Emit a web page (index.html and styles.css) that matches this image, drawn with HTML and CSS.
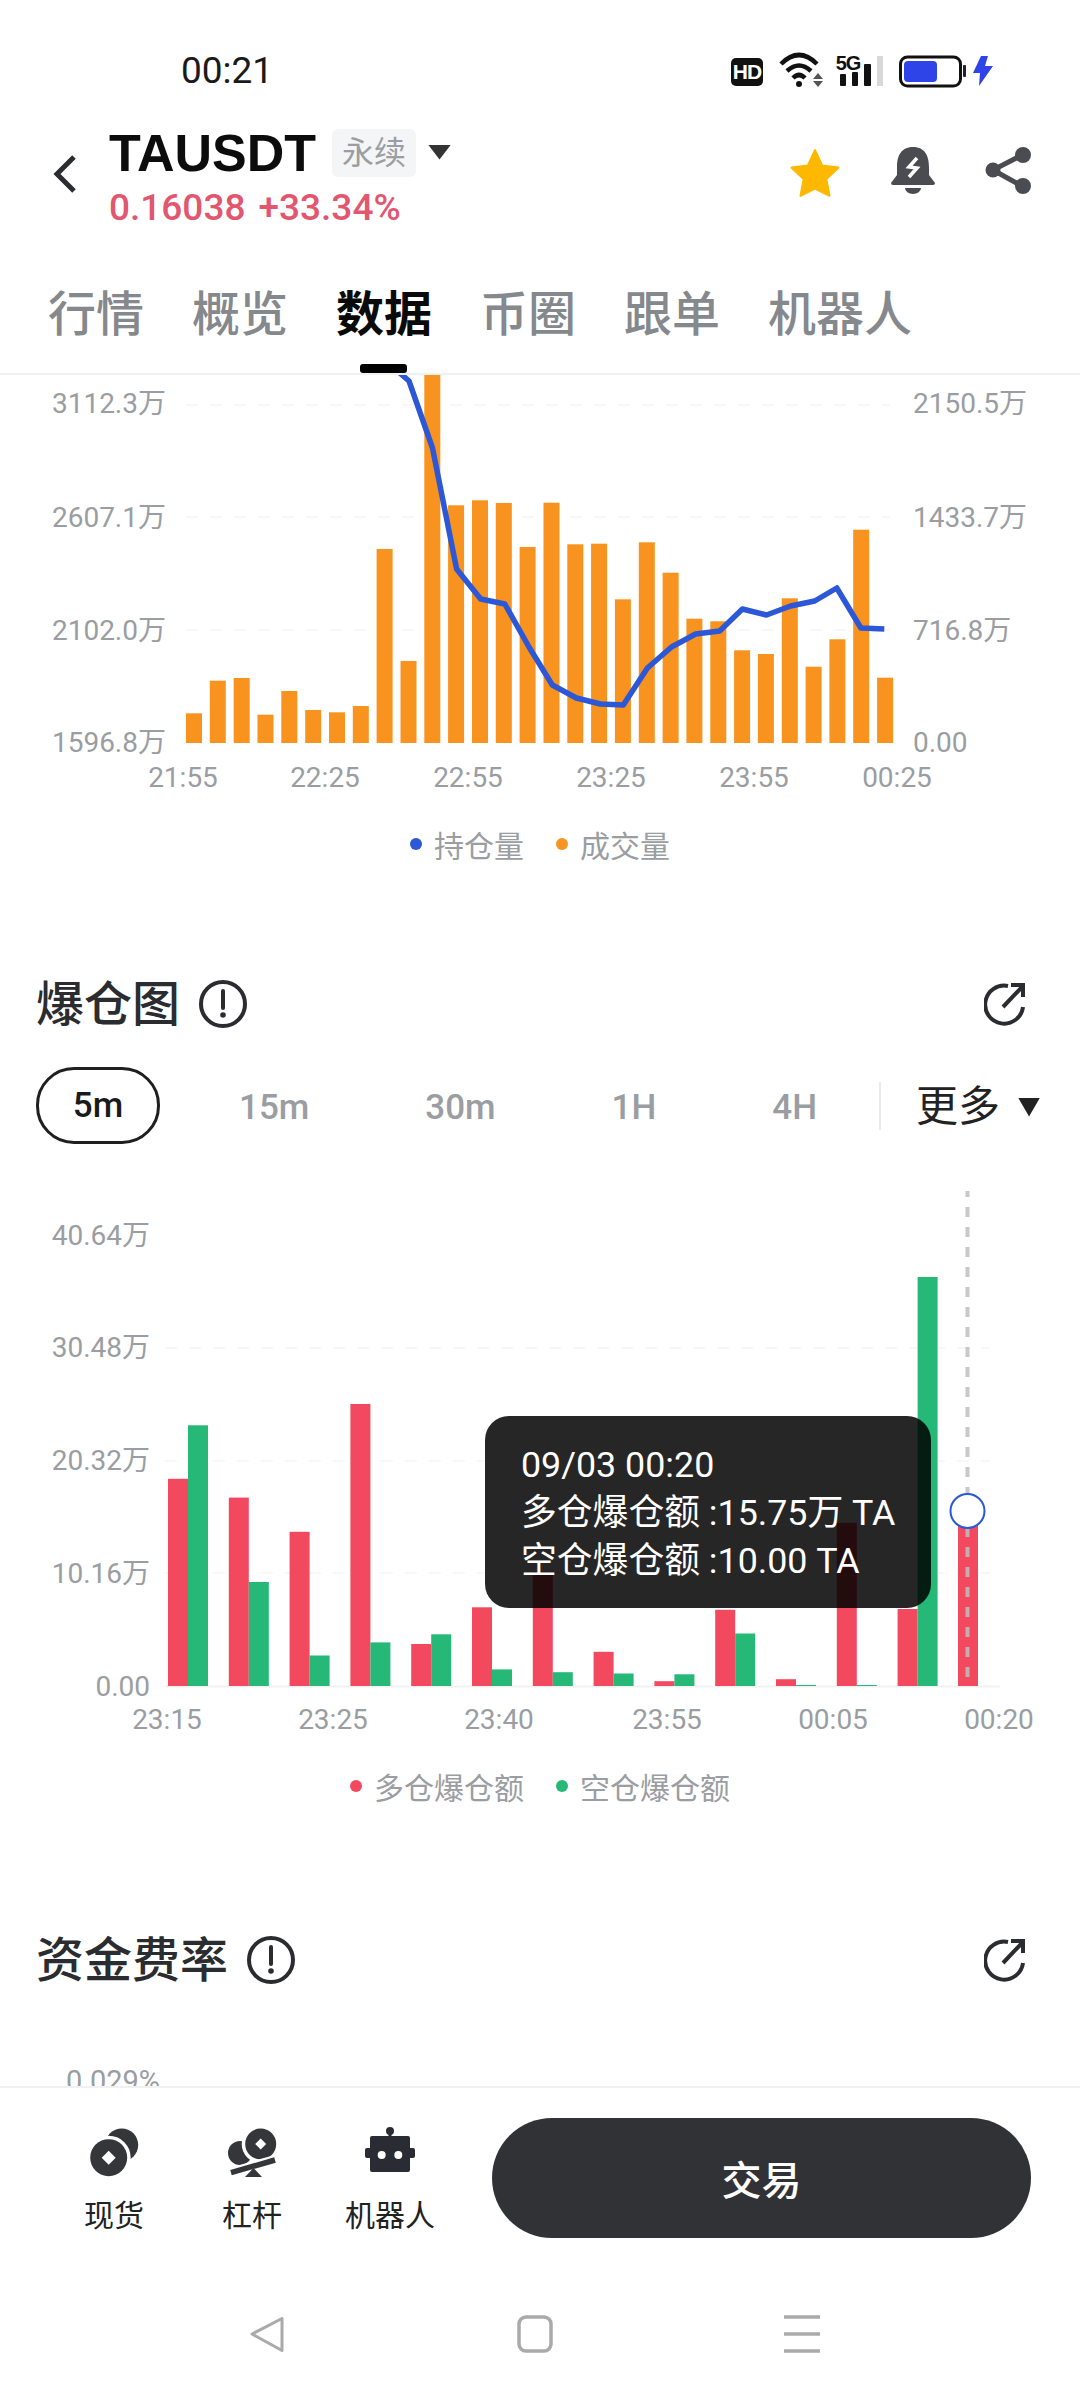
FILE: index.html
```html
<!DOCTYPE html>
<html lang="zh">
<head>
<meta charset="utf-8">
<title>TAUSDT</title>
<link rel="stylesheet" href="styles.css">
</head>
<body>
<div class="page">
  <div class="status">
    <span class="clock">00:21</span>
    <svg class="status-icons" width="265" height="40" viewBox="731 50 265 40">
      <rect x="731" y="58" width="32" height="28" rx="5" fill="#111"/>
      <text class="st-hd" x="747" y="79" text-anchor="middle">HD</text>
      <path class="st-wifi" d="M781 64Q799 46 817 64M787 71Q799 60 811 71M793 78Q799 72 805 78"/>
      <circle cx="799" cy="84" r="3" fill="#111"/>
      <path d="M818 73l5 6h-10zM818 87l5-6h-10z" fill="#555"/>
      <text class="st-5g" x="848" y="70" text-anchor="middle">5G</text>
      <rect x="840" y="74" width="6" height="12" rx="1" fill="#111"/>
      <rect x="852" y="72" width="6" height="14" rx="1" fill="#111"/>
      <rect x="864" y="64" width="7" height="22" rx="1" fill="#111"/>
      <rect x="877" y="56" width="6" height="30" fill="#d9d9d9"/>
      <rect x="900.500" y="57" width="60" height="29" rx="7" fill="#fff" stroke="#111" stroke-width="3"/>
      <rect x="904" y="61" width="33" height="21" rx="4" fill="#2f44e8"/>
      <rect x="963" y="65" width="3" height="12" rx="1" fill="#222"/>
      <path d="M981 56l-8 17h7l-1 13 14-20h-8l3-10z" fill="#2f44e8"/>
    </svg>
  </div>

  <header class="head">
    <svg class="back" width="26" height="40" viewBox="0 0 26 40"><path d="M22 3L5 20l17 17" fill="none" stroke="#2a2c30" stroke-width="5"/></svg>
    <div class="sym">
      <div class="sym-row">
        <span class="sym-name">TAUSDT</span>
        <span class="sym-tag">永续</span>
        <span class="caret-sm"></span>
      </div>
      <div class="sym-price"><span>0.16038</span><span>+33.34%</span></div>
    </div>
    <div class="head-actions">
      <svg width="52" height="50" viewBox="0 0 50 48"><path d="M25 3l6.800 14.800 15.700 2-11.600 11 3 16-13.900-6.800-13.900 6.800 3-16L2.500 19.800l15.700-2z" fill="#ffb800" stroke="#ffb800" stroke-width="2" stroke-linejoin="round"/></svg>
      <svg width="44" height="47" viewBox="0 0 44 47"><path d="M22 0C10 0 6 9 6 20v8l-6 8q0 2 2 2h40q2 0 2-2l-6-8v-8C38 9 34 0 22 0z" fill="#4a4c52"/><path d="M14 41h16a8 6 0 0 1-16 0z" fill="#4a4c52"/><path d="M26 11l-8 9 8 1-8 9" fill="none" stroke="#fff" stroke-width="3.500"/></svg>
      <svg width="46" height="47" viewBox="0 0 46 47"><path d="M37 8L8 23l29 16" fill="none" stroke="#4a4c52" stroke-width="5"/><circle cx="8" cy="23" r="7.500" fill="#4a4c52"/><circle cx="38" cy="8" r="8" fill="#4a4c52"/><circle cx="38" cy="39" r="8" fill="#4a4c52"/></svg>
    </div>
  </header>

  <nav class="tabs">
    <span class="tab">行情</span>
    <span class="tab">概览</span>
    <span class="tab tab-on">数据</span>
    <span class="tab">币圈</span>
    <span class="tab">跟单</span>
    <span class="tab">机器人</span>
    <i class="tab-mark"></i>
  </nav>

  <main class="main">
    <svg class="chart chart-a" width="1080" height="435" viewBox="0 375 1080 435">
      <g class="grid">
        <path d="M186 405H890M186 517H890M186 630H890"/>
      </g>
      <g class="axis">
        <text x="166" y="413" text-anchor="end">3112.3万</text>
        <text x="166" y="527" text-anchor="end">2607.1万</text>
        <text x="166" y="640" text-anchor="end">2102.0万</text>
        <text x="166" y="752" text-anchor="end">1596.8万</text>
        <text x="913" y="413">2150.5万</text>
        <text x="913" y="527">1433.7万</text>
        <text x="913" y="640">716.8万</text>
        <text x="913" y="752">0.00</text>
        <text x="183" y="787" text-anchor="middle">21:55</text>
        <text x="325" y="787" text-anchor="middle">22:25</text>
        <text x="468" y="787" text-anchor="middle">22:55</text>
        <text x="611" y="787" text-anchor="middle">23:25</text>
        <text x="754" y="787" text-anchor="middle">23:55</text>
        <text x="897" y="787" text-anchor="middle">00:25</text>
      </g>
      <g class="vol">
        <rect x="186" y="713.300" width="16" height="29.700"/>
        <rect x="209.800" y="680.700" width="16" height="62.300"/>
        <rect x="233.700" y="678" width="16" height="65"/>
        <rect x="257.500" y="714.700" width="16" height="28.300"/>
        <rect x="281.300" y="691" width="16" height="52"/>
        <rect x="305.200" y="710" width="16" height="33"/>
        <rect x="329" y="712.300" width="16" height="30.700"/>
        <rect x="352.800" y="706" width="16" height="37"/>
        <rect x="376.600" y="549" width="16" height="194"/>
        <rect x="400.500" y="661" width="16" height="82"/>
        <rect x="424.300" y="370" width="16" height="373"/>
        <rect x="448.100" y="505.300" width="16" height="237.700"/>
        <rect x="472" y="500.300" width="16" height="242.700"/>
        <rect x="495.800" y="503" width="16" height="240"/>
        <rect x="519.600" y="547" width="16" height="196"/>
        <rect x="543.500" y="502.700" width="16" height="240.300"/>
        <rect x="567.300" y="544.300" width="16" height="198.700"/>
        <rect x="591.100" y="543.700" width="16" height="199.300"/>
        <rect x="614.900" y="599.300" width="16" height="143.700"/>
        <rect x="638.800" y="542.300" width="16" height="200.700"/>
        <rect x="662.600" y="572.700" width="16" height="170.300"/>
        <rect x="686.400" y="618.700" width="16" height="124.300"/>
        <rect x="710.300" y="621.300" width="16" height="121.700"/>
        <rect x="734.100" y="650.300" width="16" height="92.700"/>
        <rect x="757.900" y="654" width="16" height="89"/>
        <rect x="781.800" y="598.300" width="16" height="144.700"/>
        <rect x="805.600" y="666.700" width="16" height="76.300"/>
        <rect x="829.400" y="639.300" width="16" height="103.700"/>
        <rect x="853.200" y="529.700" width="16" height="213.300"/>
        <rect x="877.100" y="677.700" width="16" height="65.300"/>
      </g>
      <polyline class="oi" points="385,360 409,381 432.500,448 456.600,569 480.700,599 504.800,604 529,647 552.300,685 576.400,698 600.500,704 623.300,705 647.400,668 671.500,647 695.600,634 719.700,631 742.400,609 766.500,615 790.600,606 814.700,601 836.800,588 860.900,628 884.300,629"/>
    </svg>
    <div class="legend">
      <span class="lg"><i class="dot dot-blue"></i>持仓量</span>
      <span class="lg"><i class="dot dot-orange"></i>成交量</span>
    </div>

    <div class="sec-head sec-a">
      <h2 class="sec-title">爆仓图</h2>
      <svg class="info" width="50" height="50" viewBox="0 0 50 50"><circle cx="25" cy="25" r="22" fill="none" stroke="#2a2c30" stroke-width="4"/><path d="M25 12v17" stroke="#2a2c30" stroke-width="4" stroke-linecap="round"/><circle cx="25" cy="36" r="2.800" fill="#2a2c30"/></svg>
      <svg class="out" width="42" height="44" viewBox="0 0 42 44"><path d="M24 4A19 19 0 1 0 39 25M19 25L38 5M27 3H39V15" fill="none" stroke="#2a2c30" stroke-width="4"/></svg>
    </div>

    <div class="range">
      <span class="range-on">5m</span>
      <span class="range-item">15m</span>
      <span class="range-item">30m</span>
      <span class="range-item">1H</span>
      <span class="range-item">4H</span>
      <i class="range-div"></i>
      <span class="range-more">更多</span>
      <span class="caret-md"></span>
    </div>

    <div class="liq-wrap">
      <svg class="chart chart-b" width="1080" height="572" viewBox="0 1180 1080 572">
        <g class="grid">
          <path d="M165 1348H990M165 1461H990M165 1573H990"/>
        </g>
        <path class="base" d="M165 1686.500H1000"/>
        <g class="axis">
          <text x="150" y="1245" text-anchor="end">40.64万</text>
          <text x="150" y="1357" text-anchor="end">30.48万</text>
          <text x="150" y="1470" text-anchor="end">20.32万</text>
          <text x="150" y="1583" text-anchor="end">10.16万</text>
          <text x="150" y="1696" text-anchor="end">0.00</text>
          <text x="167" y="1729" text-anchor="middle">23:15</text>
          <text x="333" y="1729" text-anchor="middle">23:25</text>
          <text x="499" y="1729" text-anchor="middle">23:40</text>
          <text x="667" y="1729" text-anchor="middle">23:55</text>
          <text x="833" y="1729" text-anchor="middle">00:05</text>
          <text x="999" y="1729" text-anchor="middle">00:20</text>
        </g>
        <g class="long">
          <rect x="168" y="1478.800" width="20" height="207.200"/>
          <rect x="228.800" y="1497.600" width="20" height="188.400"/>
          <rect x="289.600" y="1531.800" width="20" height="154.200"/>
          <rect x="350.400" y="1404" width="20" height="282"/>
          <rect x="411.200" y="1644" width="20" height="42"/>
          <rect x="472" y="1607.300" width="20" height="78.700"/>
          <rect x="532.800" y="1571.800" width="20" height="114.200"/>
          <rect x="593.600" y="1651.800" width="20" height="34.200"/>
          <rect x="654.400" y="1681.200" width="20" height="4.800"/>
          <rect x="715.200" y="1609.800" width="20" height="76.200"/>
          <rect x="776" y="1679.200" width="20" height="6.800"/>
          <rect x="836.800" y="1522.900" width="20" height="163.100"/>
          <rect x="897.600" y="1609" width="20" height="77"/>
          <rect x="958" y="1511.400" width="20" height="174.600"/>
        </g>
        <g class="short">
          <rect x="188" y="1425.300" width="20" height="260.700"/>
          <rect x="248.800" y="1582" width="20" height="104"/>
          <rect x="309.600" y="1655.500" width="20" height="30.500"/>
          <rect x="370.400" y="1642.400" width="20" height="43.600"/>
          <rect x="431.200" y="1634.300" width="20" height="51.700"/>
          <rect x="492" y="1669.400" width="20" height="16.600"/>
          <rect x="552.800" y="1672.200" width="20" height="13.800"/>
          <rect x="613.600" y="1673.500" width="20" height="12.500"/>
          <rect x="674.400" y="1674.300" width="20" height="11.700"/>
          <rect x="735.200" y="1633.500" width="20" height="52.500"/>
          <rect x="796" y="1685" width="20" height="1"/>
          <rect x="856.800" y="1685" width="20" height="1"/>
          <rect x="917.600" y="1277" width="20" height="409"/>
        </g>
        <path class="cross" d="M967.500 1191V1686"/>
        <circle class="cross-dot" cx="967.500" cy="1511" r="17"/>
      </svg>
      <div class="tip">
        <div>09/03 00:20</div>
        <div>多仓爆仓额 :15.75万 TA</div>
        <div>空仓爆仓额 :10.00 TA</div>
      </div>
    </div>
    <div class="legend">
      <span class="lg"><i class="dot dot-red"></i>多仓爆仓额</span>
      <span class="lg"><i class="dot dot-green"></i>空仓爆仓额</span>
    </div>

    <div class="sec-head sec-b">
      <h2 class="sec-title">资金费率</h2>
      <svg class="info" width="50" height="50" viewBox="0 0 50 50"><circle cx="25" cy="25" r="22" fill="none" stroke="#2a2c30" stroke-width="4"/><path d="M25 12v17" stroke="#2a2c30" stroke-width="4" stroke-linecap="round"/><circle cx="25" cy="36" r="2.800" fill="#2a2c30"/></svg>
      <svg class="out" width="42" height="44" viewBox="0 0 42 44"><path d="M24 4A19 19 0 1 0 39 25M19 25L38 5M27 3H39V15" fill="none" stroke="#2a2c30" stroke-width="4"/></svg>
    </div>
    <div class="rate-label">0.029%</div>
  </main>

  <div class="dock">
    <div class="dock-item">
      <svg class="coin" width="50" height="52" viewBox="0 0 50 52"><circle cx="31.700" cy="19" r="16.500" fill="#35363a"/><circle cx="18.700" cy="31.700" r="22" fill="#fff"/><circle cx="18.700" cy="31.700" r="18.500" fill="#35363a"/><path d="M18.700 24.700l7 7-7 7-7-7z" fill="#fff"/></svg>
      <span class="dock-label">现货</span>
    </div>
    <div class="dock-item">
      <svg width="52" height="52" viewBox="0 0 52 52"><circle cx="14" cy="27" r="12" fill="#35363a"/><circle cx="34.700" cy="18" r="19" fill="#fff"/><circle cx="34.700" cy="18" r="15.500" fill="#35363a"/><path d="M34.700 12.500l5.500 5.500-5.500 5.500-5.500-5.500z" fill="#fff"/><path d="M5 46.700L49 34" stroke="#fff" stroke-width="10"/><path d="M5 46.700L49 34" stroke="#35363a" stroke-width="5.500"/><path d="M19 51h17l-8.500-9z" fill="#35363a"/></svg>
      <span class="dock-label">杠杆</span>
    </div>
    <div class="dock-item">
      <svg width="50" height="52" viewBox="0 0 50 52"><circle cx="25" cy="5" r="4" fill="#2a2c33"/><rect x="23.500" y="5" width="3" height="7" fill="#2a2c33"/><rect x="5" y="10" width="40" height="36" rx="2" fill="#2a2c33"/><rect x="0" y="22" width="50" height="10" rx="2" fill="#2a2c33"/><circle cx="16.700" cy="29" r="4" fill="#fff"/><circle cx="33.300" cy="29" r="4" fill="#fff"/></svg>
      <span class="dock-label">机器人</span>
    </div>
    <button class="trade" type="button">交易</button>
  </div>

  <div class="sysnav">
    <svg width="36" height="38" viewBox="0 0 36 38"><path d="M33 3.500L3 19l30 16.500z" fill="none" stroke="#aaa" stroke-width="3" stroke-linejoin="round"/></svg>
    <svg width="36" height="38" viewBox="0 0 36 38"><rect x="2" y="2" width="32" height="34" rx="7" fill="none" stroke="#aaa" stroke-width="3.500"/></svg>
    <svg width="36" height="38" viewBox="0 0 36 38"><path d="M0 2H36M0 19H36M0 36H36" stroke="#aaa" stroke-width="3.500"/></svg>
  </div>
</div>
</body>
</html>
```
FILE: styles.css
```css
* { box-sizing: border-box; }
html, body { margin: 0; padding: 0; background: #fff; }
body { font-family: Roboto, "Noto Sans CJK SC", sans-serif; }
.page { width: 1080px; height: 2400px; display: flex; flex-direction: column; overflow: hidden; background: #fff; }

.status { height: 110px; flex: none; display: flex; align-items: flex-start; justify-content: space-between; padding: 50px 84px 0 181px; }
.clock { font-size: 37px; line-height: 42px; color: #1a1a1a; font-weight: 400; }
.status-icons { display: block; }
.st-hd { font: 700 21px "Liberation Sans", sans-serif; fill: #fff; letter-spacing: -1px; }
.st-5g { font: 700 20px "Liberation Sans", sans-serif; fill: #111; letter-spacing: -1px; }
.st-wifi { fill: none; stroke: #111; stroke-width: 4.5; }

.head { height: 145px; flex: none; position: relative; display: flex; align-items: flex-start; padding: 15px 49px 0 52px; }
.back { flex: none; margin-top: 29px; }
.sym { margin-left: 31px; display: flex; flex-direction: column; }
.sym-row { display: flex; align-items: center; height: 56px; }
.sym-name { font: 700 52px/56px "Liberation Sans", sans-serif; color: #0c0c0c; }
.sym-tag { margin-left: 16px; width: 84px; height: 48px; border-radius: 6px; background: #f4f5f6; color: #9a9da1; font-size: 32px; line-height: 48px; text-align: center; }
.caret-sm { margin-left: 12px; margin-top: -2px; width: 23px; height: 15px; background: #333; clip-path: polygon(0 0, 100% 0, 50% 100%); }
.sym-price { display: flex; gap: 13px; margin-top: 6px; font-size: 37px; line-height: 42px; font-weight: 500; color: #e2566f; }
.head-actions { margin-left: auto; margin-top: 22px; display: flex; gap: 50px; align-items: flex-start; }
.head-actions svg { display: block; }

.tabs { height: 120px; flex: none; position: relative; display: flex; align-items: flex-start; gap: 48px; padding: 28px 0 0 48px; border-bottom: 2px solid #f1f1f1; }
.tab { font-size: 48px; line-height: 64px; font-weight: 500; color: #85888c; }
.tab-on { color: #0a0a0a; font-weight: 700; }
.tab-mark { position: absolute; left: 360px; bottom: 0; width: 47px; height: 9px; border-radius: 3px; background: #000; }

.main { height: 1713px; flex: none; overflow: hidden; border-bottom: 2px solid #f1f1f1; }
.chart { display: block; }
.grid path { fill: none; stroke: #f5f5f5; stroke-width: 1.500; stroke-dasharray: 12 12; }
.base { fill: none; stroke: #f1f1f1; stroke-width: 2; }
.axis text { font-size: 28px; fill: #9a9da1; }
.vol rect { fill: #f7931e; }
.oi { fill: none; stroke: #2c57d6; stroke-width: 5.500; stroke-linejoin: round; }
.long rect { fill: #f2495f; }
.short rect { fill: #26b877; }
.cross { stroke: rgba(190, 190, 190, .85); stroke-width: 4; stroke-dasharray: 10 10; stroke-dashoffset: 4; fill: none; }
.cross-dot { fill: #fff; stroke: #2c57d6; stroke-width: 2; }

.legend { height: 70px; display: flex; justify-content: center; gap: 32px; align-items: center; padding-bottom: 2px; }
.lg { display: flex; align-items: center; gap: 12px; font-size: 30px; color: #9a9da1; }
.dot { width: 12px; height: 12px; border-radius: 50%; }
.dot-blue { background: #2c57d6; }
.dot-orange { background: #f7931e; }
.dot-red { background: #f2495f; }
.dot-green { background: #26b877; }

.sec-head { height: 60px; display: flex; align-items: center; padding: 0 54px 0 36px; }
.sec-a { margin-top: 94px; }
.sec-b { margin-top: 108px; }
.sec-title { margin: 0; padding-top: 2px; font-size: 48px; line-height: 60px; font-weight: 500; color: #2a2c30; }
.info { margin-left: 18px; flex: none; }
.out { margin-left: auto; flex: none; }

.range { margin-top: 33px; height: 77px; display: flex; align-items: center; padding-left: 36px; }
.range-on { width: 124px; height: 77px; border: 3.500px solid #1f1f1f; border-radius: 38px; font-size: 35px; font-weight: 500; line-height: 72px; text-align: center; color: #1a1a1a; margin-right: 79px; }
.range-item { padding-top: 3px; font-size: 35px; font-weight: 500; color: #9a9da1; }
.range-item + .range-item { margin-left: 116px; }
.range-div { width: 2px; height: 48px; background: #ebebeb; margin-left: 62px; }
.range-more { margin-left: 35px; padding-top: 3px; font-size: 42px; line-height: 50px; color: #222; }
.caret-md { margin: 3px 0 0 18px; width: 22px; height: 19px; background: #222; clip-path: polygon(0 0, 100% 0, 50% 100%); }

.liq-wrap { position: relative; margin-top: 36px; }
.tip { position: absolute; left: 485px; top: 236px; width: 446px; height: 192px; padding: 25px 0 0 36px; border-radius: 24px; background: rgba(0, 0, 0, .85); color: #fff; font-size: 35.800px; line-height: 48px; white-space: nowrap; }

.rate-label { margin: 74px 0 0 66px; font-size: 29px; line-height: 34px; color: #9a9da1; }

.dock { height: 182px; flex: none; display: flex; align-items: flex-start; padding: 30px 0 0 45px; }
.dock-item { width: 138px; padding-top: 8px; display: flex; flex-direction: column; align-items: center; }
.dock-item svg { display: block; }
.coin { margin-left: 2px; }
.dock-label { margin-top: 18px; font-size: 30px; line-height: 40px; color: #222; }
.trade { margin-left: 33px; width: 539px; height: 120px; border: 0; border-radius: 60px; background: #313236; color: #fff; font-family: inherit; font-size: 40px; font-weight: 500; }

.sysnav { flex: 1; display: flex; justify-content: space-between; align-items: flex-start; padding: 45px 260px 0 249px; }
.sysnav svg { display: block; }
```
